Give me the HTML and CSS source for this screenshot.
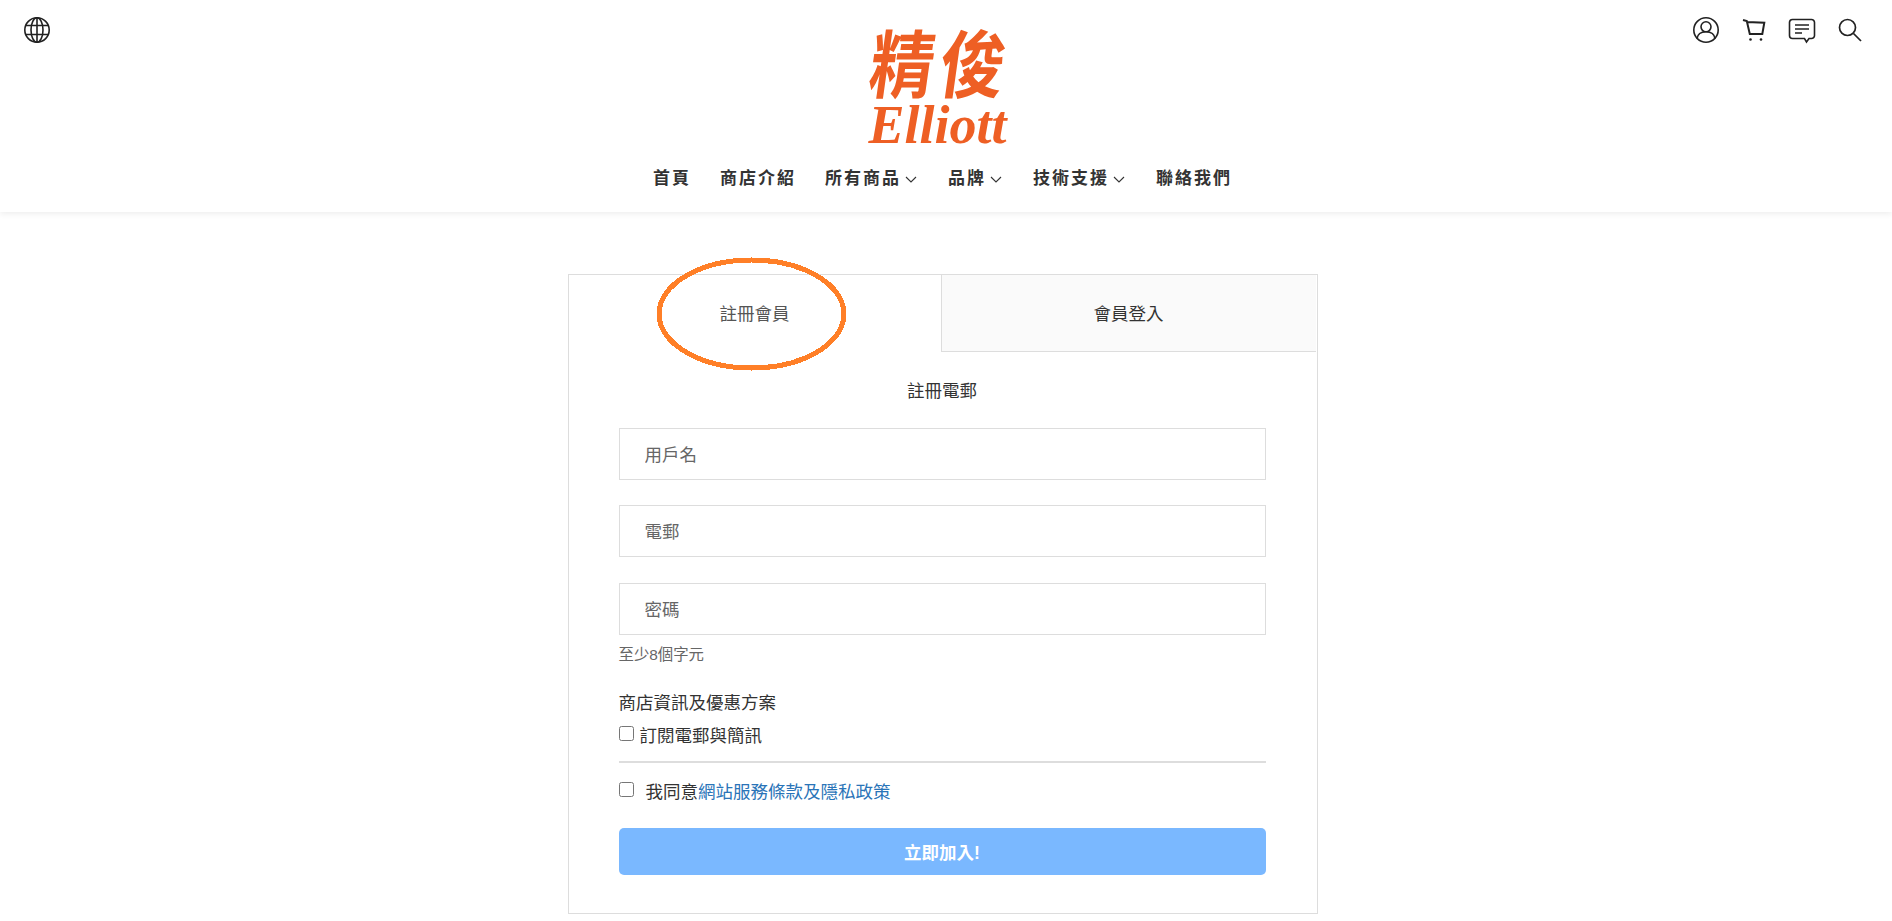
FILE: index.html
```html
<!DOCTYPE html>
<html lang="zh-Hant">
<head>
<meta charset="utf-8">
<title>註冊會員</title>
<link rel="stylesheet" href="styles.css">
</head>
<body>
<header class="site-header">
  <div class="top-row">
    <div class="top-left">
      <svg class="icon" viewBox="0 0 28 28" fill="none" stroke="#222" stroke-width="1.6">
        <circle cx="14" cy="14" r="12.2"/>
        <ellipse cx="14" cy="14" rx="6" ry="12.2"/>
        <path d="M14 1.8V26.200M2.800 9.500H25.200M2.800 18.500H25.200"/>
      </svg>
    </div>
    <div class="logo">
      <div class="logo-cjk">精俊</div>
      <div class="logo-latin">Elliott</div>
    </div>
    <div class="top-right">
      <svg class="icon" viewBox="0 0 28 28" fill="none" stroke="#222" stroke-width="1.6">
        <circle cx="14" cy="14" r="12.200"/>
        <circle cx="14" cy="10.800" r="5"/>
        <path d="M5 22.800c.6-4.800 3.800-7 9-7s8.400 2.200 9 7"/>
      </svg>
      <svg class="icon" viewBox="0 0 28 28" fill="none" stroke="#222" stroke-width="2">
        <path d="M3 4l3.800 1 3 13h12.500l2-11.300L7 6"/>
        <circle cx="10.500" cy="23.500" r="1.300" fill="#222" stroke="none"/>
        <circle cx="21" cy="23.500" r="1.300" fill="#222" stroke="none"/>
      </svg>
      <svg class="icon" viewBox="0 0 28 28" fill="none" stroke="#222" stroke-width="1.6">
        <path d="M4.500 3.500h19a3 3 0 0 1 3 3v13a3 3 0 0 1-3 3h-2.500l-2.500 3.500-2-3.500h-12a3 3 0 0 1-3-3v-13a3 3 0 0 1 3-3z"/>
        <path d="M7 9h14M7 13h14M7 17h7"/>
      </svg>
      <svg class="icon" viewBox="0 0 28 28" fill="none" stroke="#222" stroke-width="1.7">
        <circle cx="11.500" cy="11.500" r="8"/>
        <path d="M17.500 17.500l7.500 7.500"/>
      </svg>
    </div>
  </div>
  <nav class="main-nav">
    <a class="nav-item">首頁</a>
    <a class="nav-item">商店介紹</a>
    <a class="nav-item">所有商品<svg class="chev" viewBox="0 0 12 7" fill="none" stroke="#333" stroke-width="1.1"><path d="M1 1l5 5 5-5"/></svg></a>
    <a class="nav-item">品牌<svg class="chev" viewBox="0 0 12 7" fill="none" stroke="#333" stroke-width="1.1"><path d="M1 1l5 5 5-5"/></svg></a>
    <a class="nav-item">技術支援<svg class="chev" viewBox="0 0 12 7" fill="none" stroke="#333" stroke-width="1.1"><path d="M1 1l5 5 5-5"/></svg></a>
    <a class="nav-item">聯絡我們</a>
  </nav>
</header>
<main class="page">
  <section class="card">
    <div class="tabs">
      <div class="tab tab-active">註冊會員
        <svg class="annotation" viewBox="0 0 190 114" fill="none" stroke="#ff7f27" stroke-width="5" shape-rendering="crispEdges"><ellipse cx="94.500" cy="57" rx="92.500" ry="54"/></svg>
      </div>
      <div class="tab tab-idle">會員登入</div>
    </div>
    <form class="form">
      <div class="form-title">註冊電郵</div>
      <input class="field" type="text" placeholder="用戶名">
      <input class="field field-mid" type="text" placeholder="電郵">
      <input class="field field-last" type="password" placeholder="密碼">
      <div class="hint">至少8個字元</div>
      <div class="promo-title">商店資訊及優惠方案</div>
      <label class="check-row"><input class="check" type="checkbox"><span>訂閱電郵與簡訊</span></label>
      <div class="divider"></div>
      <label class="check-row agree"><input class="check" type="checkbox"><span>我同意<a class="link">網站服務條款及隱私政策</a></span></label>
      <button class="submit" type="button">立即加入!</button>
    </form>
  </section>
</main>
</body>
</html>
```
FILE: styles.css
```css
* { box-sizing: border-box; }
html, body { margin: 0; height: 100%; overflow: hidden; background: #fff; }
body {
  font-family: "Liberation Sans", "Noto Sans CJK TC", sans-serif;
  color: #333;
  font-size: 17.5px;
}
.site-header {
  height: 212px;
  padding-right: 7px;
  box-shadow: 0 2px 6px rgba(0, 0, 0, .07);
  display: flex;
  flex-direction: column;
}
.top-row {
  display: grid;
  grid-template-columns: 1fr auto 1fr;
  height: 152px;
}
.top-left { padding: 16px 0 0 23px; }
.top-right {
  display: flex;
  justify-content: flex-end;
  gap: 20px;
  padding: 16px 21px 0 0;
}
.icon { width: 28px; height: 28px; display: block; }
.logo {
  width: 142px;
  margin-right: 10px;
  padding-top: 20px;
  color: #ee5f24;
  text-align: center;
}
.logo-cjk {
  font-family: "Noto Sans CJK TC", sans-serif;
  font-weight: 700;
  font-size: 64px;
  line-height: 80px;
  white-space: nowrap;
  letter-spacing: 6px;
  padding-left: 4px;
  transform: skewX(-8deg) scaleY(1.15);
}
.logo-latin {
  font-family: "Liberation Serif", serif;
  font-weight: 700;
  font-style: italic;
  font-size: 54px;
  line-height: 46px;
  margin-top: 2px;
  white-space: nowrap;
}
.main-nav {
  display: flex;
  justify-content: center;
  gap: 29px;
  height: 50px;
  margin-top: 2px;
}
.nav-item {
  font-weight: 700;
  font-size: 17px;
  letter-spacing: 2px;
  line-height: 50px;
  color: #333;
  display: flex;
  align-items: center;
  white-space: nowrap;
}
.chev { width: 12px; height: 7px; margin: 1px 2px 0 4px; }
.page {
  display: flex;
  justify-content: center;
  padding: 62px 7px 0 0;
}
.card {
  width: 750px;
  height: 640px;
  border: 1px solid #ddd;
  flex: none;
}
.tabs {
  display: grid;
  grid-template-columns: 372px 1fr;
  height: 77px;
}
.tab {
  display: flex;
  align-items: center;
  justify-content: center;
  color: #333;
  padding-bottom: 2px;
}
.tab-active { position: relative; color: #555; }
.tab-idle {
  background: #fafafa;
  border-left: 1px solid #ddd;
  border-bottom: 1px solid #ddd;
  margin-right: 1px;
}
.annotation {
  position: absolute;
  left: 88px;
  top: -18px;
  width: 190px;
  height: 114px;
}
.form {
  padding: 0 51px 0 50px;
  display: flex;
  flex-direction: column;
}
.form-title {
  text-align: center;
  line-height: 24px;
  margin-top: 27px;
  margin-bottom: 25px;
}
.field {
  display: block;
  width: 100%;
  height: 52px;
  flex: none;
  border: 1px solid #ddd;
  border-radius: 0;
  padding: 3px 25px 0;
  margin-bottom: 25px;
  font: inherit;
  outline: none;
  background: #fff;
}
.field::placeholder { color: #666; opacity: 1; }
.field-mid { margin-bottom: 26px; }
.field-last { margin-bottom: 0; }
.hint {
  font-size: 15.4px;
  color: #666;
  line-height: 20px;
  margin-top: 10px;
}
.promo-title { line-height: 24px; margin-top: 26px; }
.check-row {
  display: flex;
  align-items: center;
  line-height: 24px;
  margin-top: 9px;
}
.check {
  width: 15px;
  height: 15px;
  margin: 0 6px 0 0;
  flex: none;
  position: relative;
  top: -3px;
}
.divider {
  height: 2px;
  background: #ddd;
  margin-top: 13px;
}
.agree { margin-top: 17px; }
.agree .check { margin-right: 12px; }
.link { color: #2a74b8; }
.submit {
  margin-top: 24px;
  height: 47px;
  border: 0;
  border-radius: 5px;
  background: #7ab8ff;
  color: #fff;
  font: inherit;
  font-weight: 700;
  padding-bottom: 2px;
}
```
